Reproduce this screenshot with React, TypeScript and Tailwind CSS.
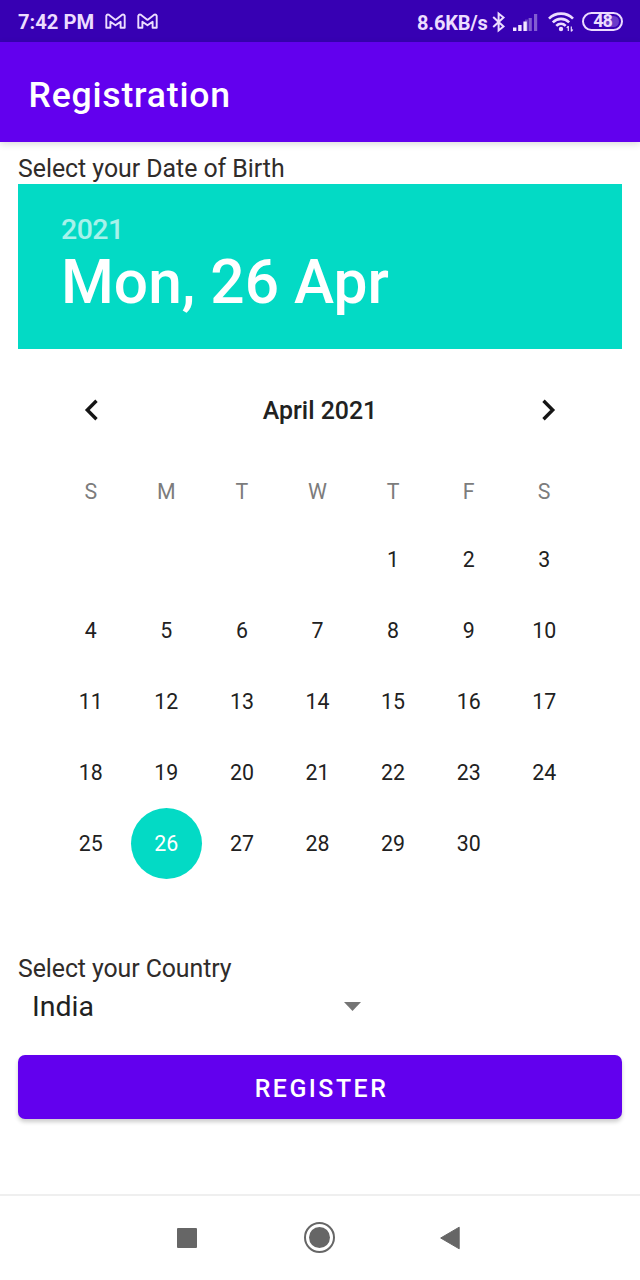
import React from "react";

const weekdays = ["S", "M", "T", "W", "T", "F", "S"];
const blanks = [0, 1, 2, 3];
const days = Array.from({ length: 30 }, (_, i) => i + 1);

function MailIcon() {
  return (
    <svg width="21" height="17" viewBox="0 0 21 17" fill="none" stroke="#ecdcff" strokeWidth="1.900" strokeLinejoin="round">
      <path d="M1.300 2.800V14.800H5.400V8.700L10.500 12.300L15.600 8.700V14.800H19.700V2.800Q19.200 1.300 17.500 1.600L10.500 6.900L3.500 1.600Q1.800 1.300 1.300 2.800Z" />
    </svg>
  );
}

function BluetoothIcon() {
  return (
    <svg width="14" height="22" viewBox="0 0 14 22" fill="none" stroke="#ecdcff" strokeWidth="2">
      <path d="M1.200 6L11.500 15.500L6.600 19.500V2.500L11.500 6.500L1.200 16" />
    </svg>
  );
}

function SignalIcon() {
  return (
    <svg width="25" height="19" viewBox="0 0 25 19" fill="#f3e8ff">
      <rect x="0" y="14.500" width="3.400" height="3.500" />
      <rect x="5.200" y="12" width="3.400" height="6" />
      <rect x="10.400" y="8.500" width="3.400" height="9.500" />
      <rect x="15.600" y="5" width="3.200" height="13" opacity=".4" />
      <rect x="21" y="1" width="3.200" height="17" opacity=".4" />
      <rect x="12" y="6.500" width="3" height="11.500" opacity=".25" />
    </svg>
  );
}

function WifiIcon() {
  return (
    <svg width="26" height="22" viewBox="0 0 26 22" fill="none" stroke="#ecdcff" strokeWidth="2.600">
      <path d="M1 7.600C7.500 1 18.500 1 25 7.600" />
      <path d="M4.800 11.400C9.500 6.700 16.500 6.700 21.200 11.400" />
      <path d="M8.300 14.900C11 12.200 15 12.200 17.700 14.900" />
      <circle cx="13" cy="18" r="2.200" fill="#ecdcff" stroke="none" />
      <path d="M20.300 20V15M18.800 17L20.300 15M23.300 15.500V20.500M24.800 18.500L23.300 20.500" strokeWidth="1.200" />
    </svg>
  );
}

function StatusBar() {
  return (
    <div className="flex h-[42px] items-center bg-[#3700b3] pl-[18px] pr-[17px] pt-[2px] text-[20.200px] font-bold text-[#ecdcff]">
      <span className="w-[87px] whitespace-nowrap leading-6">7:42 PM</span>
      <div className="flex gap-[11px] pb-[2px]">
        <MailIcon />
        <MailIcon />
      </div>
      <span className="ml-auto w-[75px] whitespace-nowrap pt-px text-[20px] leading-6 tracking-[-0.200px]">8.6KB/s</span>
      <BluetoothIcon />
      <div className="ml-[7px]">
        <SignalIcon />
      </div>
      <div className="ml-[10px]">
        <WifiIcon />
      </div>
      <div className="mb-[2px] ml-[8px] flex h-[19px] w-[41px] items-center justify-center rounded-full border-2 border-[#ecdcff] bg-linear-to-r from-transparent from-60% to-[#6a3bc8] to-60% bg-clip-content p-[2px] text-[18px] leading-none tracking-[-1px]">
        48
      </div>
    </div>
  );
}

export default function App() {
  return (
    <div className="flex h-[1280px] w-[640px] flex-col overflow-hidden bg-white font-[Roboto,sans-serif] text-[#212121]">
      <StatusBar />
      <header className="flex h-[100px] shrink-0 items-center bg-[#6200ee] pl-[28.500px] pt-[7px] text-[35.560px] font-medium tracking-[0.800px] text-white shadow-[0_2px_7px_rgba(0,0,0,0.15)]">
        Registration
      </header>
      <main className="flex flex-1 flex-col px-[18px] pt-[12px]">
        <p className="h-[30px] text-[24.890px] leading-[29px] tracking-[-0.030px] text-[#302c2a]">Select your Date of Birth</p>
        <section className="h-[165px] bg-[#03dac5] pl-[43px] pt-[29px] font-medium text-white">
          <div className="text-[28.440px] leading-[34px] tracking-[-0.500px] text-white/65">2021</div>
          <div className="text-[60.440px] leading-[72px]">Mon, 26 Apr</div>
        </section>
        <section className="ml-[35px] h-[605px] w-[529px]">
          <div className="flex h-[122px] items-center justify-between pl-[31px] pr-[26px]">
            <svg width="14" height="22" viewBox="0 0 14 22" fill="none" stroke="#151515" strokeWidth="3.400">
              <path d="M12.500 1.800L3.300 11L12.500 20.200" />
            </svg>
            <h2 className="pt-[2px] text-[24.890px] font-medium">April 2021</h2>
            <svg width="14" height="22" viewBox="0 0 14 22" fill="none" stroke="#151515" strokeWidth="3.400">
              <path d="M1.500 1.800L10.700 11L1.500 20.200" />
            </svg>
          </div>
          <div className="grid h-[53px] grid-cols-7 pt-[5px] text-center text-[21.330px] leading-[32px] text-[#7c7c7c]">
            {weekdays.map((d, i) => (
              <span key={i}>{d}</span>
            ))}
          </div>
          <div className="grid auto-rows-[71.110px] grid-cols-7 text-[21.330px]">
            {blanks.map((b) => (
              <span key={`b${b}`} />
            ))}
            {days.map((d) => (
              <div key={d} className="flex items-center justify-center">
                {d === 26 ? (
                  <span className="flex size-[71px] items-center justify-center rounded-full bg-[#03dac5] text-white">26</span>
                ) : (
                  d
                )}
              </div>
            ))}
          </div>
        </section>
        <p className="h-[30px] text-[24.890px] leading-[29px] tracking-[-0.080px] text-[#302c2a]">Select your Country</p>
        <div className="flex h-[45px] w-[343px] items-center justify-between pl-[14px]">
          <span className="text-[28.440px] leading-[34px]">India</span>
          <svg className="mb-px" width="17" height="9" viewBox="0 0 17 9" fill="#757575">
            <path d="M0 0H17L8.500 9Z" />
          </svg>
        </div>
        <button className="mt-[26px] h-[64px] rounded-[7px] bg-[#6200ee] pl-[3px] pt-[3px] text-[24.890px] font-medium tracking-[2.500px] text-white shadow-[0_3px_4px_rgba(0,0,0,0.2)]">
          REGISTER
        </button>
      </main>
      <nav className="flex h-[86px] shrink-0 items-center border-t-2 border-[#efefef] pb-px pl-[177px] text-[#666666]">
        <div className="size-[20px] rounded-[1px] bg-[#666666]" />
        <div className="ml-[107px] flex size-[31px] items-center justify-center rounded-full border-2 border-[#666666]">
          <div className="size-[21px] rounded-full bg-[#666666]" />
        </div>
        <svg className="ml-[105px]" width="20" height="24" viewBox="0 0 20 24" fill="currentColor" stroke="currentColor" strokeLinejoin="round">
          <path d="M.7 12L19.200 1.200V22.800Z" />
        </svg>
      </nav>
    </div>
  );
}
